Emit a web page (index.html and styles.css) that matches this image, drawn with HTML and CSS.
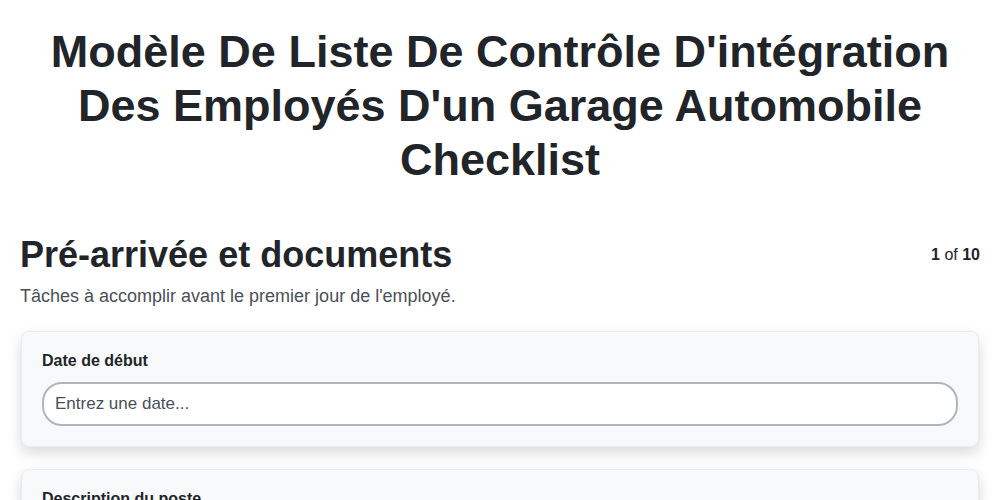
FILE: index.html
```html
<!DOCTYPE html>
<html lang="fr">
<head>
  <meta charset="UTF-8">
  <meta name="viewport" content="width=device-width, initial-scale=1.0">
  <title>Checklist</title>
  <link rel="stylesheet" href="styles.css">
</head>
<body>
  <div class="container">
    <h1>Modèle De Liste De Contrôle D'intégration Des Employés D'un Garage Automobile Checklist</h1>

    <div class="section-head">
      <h2>Pré-arrivée et documents</h2>
      <div class="step"><b>1</b> of <b>10</b></div>
    </div>
    <p class="section-desc">Tâches à accomplir avant le premier jour de l'employé.</p>

    <div class="field-card">
      <label for="startDate">Date de début</label>
      <input type="text" id="startDate" placeholder="Entrez une date...">
    </div>

    <div class="field-card">
      <label for="jobDesc">Description du poste</label>
      <input type="text" id="jobDesc" placeholder="Entrez une description...">
    </div>
  </div>
</body>
</html>
```

FILE: styles.css
```css
body {
  font-family: "Liberation Sans", Arial, sans-serif;
  margin: 0;
  padding: 0;
  background-color: #fff;
  color: #212529;
}

.container {
  padding: 25px 20px 20px 20px;
}

h1 {
  font-size: 45px;
  line-height: 54px;
  font-weight: bold;
  text-align: center;
  margin: 0 0 46px 0;
  padding: 0 30px;
  color: #212529;
}

.section-head {
  display: flex;
  justify-content: space-between;
  align-items: center;
}

.section-head h2 {
  font-size: 36px;
  line-height: 43px;
  margin: 0;
  color: #212529;
}

.step {
  font-size: 16px;
  line-height: 24px;
  color: #212529;
}

.section-desc {
  font-size: 18px;
  line-height: 27px;
  color: #495057;
  margin: 7px 0 21px 0;
}

.field-card {
  margin: 0 1px 22px 1px;
  padding: 20px 20px 20px 20px;
  border: 1px solid #e9ecef;
  border-radius: 8px;
  background-color: #f8f9fa;
  box-shadow: 0 6px 14px rgba(0, 0, 0, 0.15);
}

.field-card label {
  display: block;
  font-size: 16px;
  line-height: 18px;
  font-weight: bold;
  margin-bottom: 12px;
  color: #212529;
}

.field-card input {
  display: block;
  width: 100%;
  box-sizing: border-box;
  height: 44px;
  padding: 10px 11px;
  font-family: "Liberation Sans", Arial, sans-serif;
  font-size: 17px;
  border: 2px solid #adb5bd;
  border-radius: 20px;
  background-color: #fff;
  color: #212529;
  outline: none;
}

.field-card input::placeholder {
  color: #495057;
  opacity: 1;
}
```
